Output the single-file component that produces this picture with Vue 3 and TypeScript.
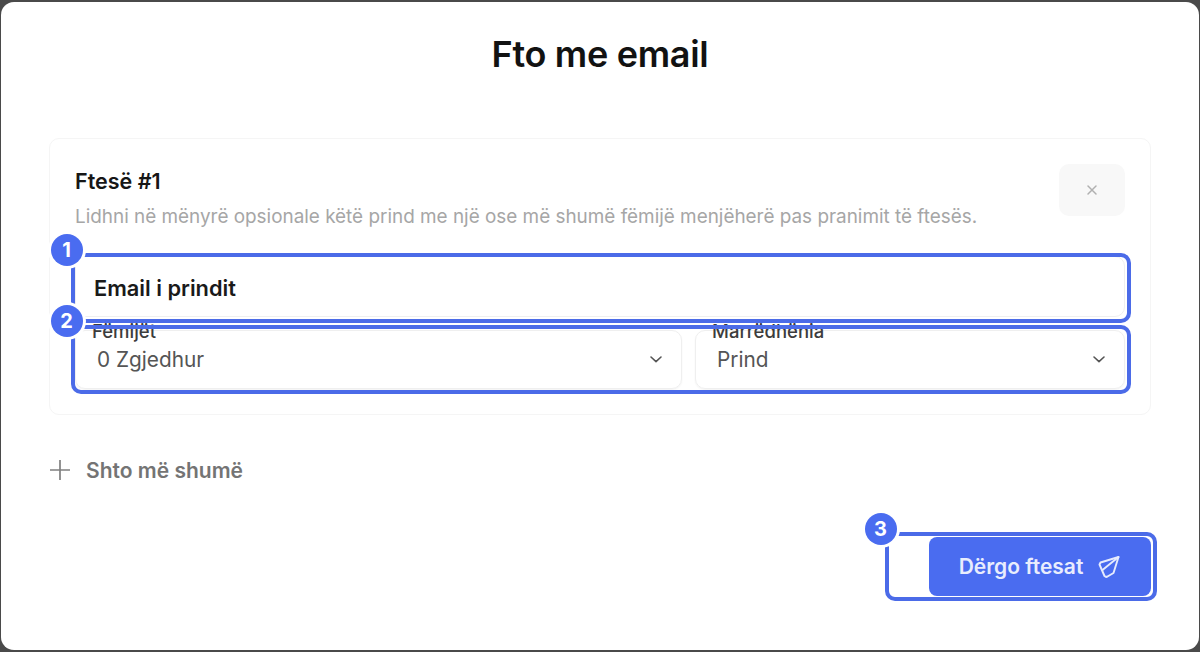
<script setup lang="ts">
const selects = [
  { label: 'Fëmijët', value: '0 Zgjedhur', cls: 'grow-a' },
  { label: 'Marrëdhënia', value: 'Prind', cls: 'grow-b' },
]
</script>

<template>
  <div class="page">
    <main class="modal">
      <h1 class="title">Fto me email</h1>
      <section class="card">
        <div class="card-head">
          <div class="head-text">
            <h2>Ftesë #1</h2>
            <p>Lidhni në mënyrë opsionale këtë prind me një ose më shumë fëmijë menjëherë pas pranimit të ftesës.</p>
          </div>
          <button class="close" type="button" aria-label="Mbyll">
            <svg width="12" height="12" viewBox="0 0 12 12" fill="none" stroke="#b0b0b0" stroke-width="1.5" stroke-linecap="round">
              <path d="M2 2l8 8M10 2l-8 8" />
            </svg>
          </button>
        </div>
        <div class="email-field">Email i prindit</div>
        <div class="select-row">
          <div v-for="s in selects" :key="s.label" class="select" :class="s.cls">
            <span class="float-label">{{ s.label }}</span>
            <span class="value">{{ s.value }}</span>
            <svg class="chev" width="16" height="16" viewBox="0 0 16 16" fill="none" stroke="#555" stroke-width="1.6" stroke-linecap="round" stroke-linejoin="round">
              <path d="M3 6l5 4.6L13 6" />
            </svg>
          </div>
        </div>
      </section>
      <button class="add" type="button">
        <svg width="22" height="22" viewBox="0 0 22 22" fill="none" stroke="#808080" stroke-width="1.7">
          <path d="M11 1v20M1 11h20" />
        </svg>
        <span>Shto më shumë</span>
      </button>
      <div class="actions">
        <button class="send" type="button">
          <span>Dërgo ftesat</span>
          <svg width="24" height="24" viewBox="0 0 24 24" fill="none" stroke="#e6ebfd" stroke-width="1.9" stroke-linejoin="round" stroke-linecap="round">
            <path d="M21.500 2L3.500 7.500 2.500 9.500l5 11.500 1.500 1 1.500-.5 6-3.500z" />
            <path d="M21.500 2L5.500 15" />
          </svg>
        </button>
      </div>
    </main>

    <div class="mark mark-1"><b>1</b></div>
    <div class="mark mark-2"><b>2</b></div>
    <div class="mark mark-3"><b>3</b></div>
  </div>
</template>

<style>
html, body { margin: 0; background: #4a4a4a; }
</style>

<style scoped>
.page {
  position: relative;
  width: 1200px;
  height: 652px;
  overflow: hidden;
  padding: 2px 1px 2px 1px;
  box-sizing: border-box;
  font-family: Inter, "Liberation Sans", sans-serif;
  display: flex;
}
.modal {
  flex: 1;
  background: #fff;
  border-radius: 13px;
  padding: 0 48px;
  display: flex;
  flex-direction: column;
}
.title {
  margin: 30px 0 0;
  height: 44px;
  line-height: 44px;
  text-align: center;
  font-size: 36px;
  font-weight: 600;
  letter-spacing: -0.3px;
  color: #121212;
}
.card {
  margin-top: 62px;
  height: 277px;
  box-sizing: border-box;
  border: 1.5px solid #f5f5f5;
  border-radius: 10px;
  padding: 25px 25px 0;
  display: flex;
  flex-direction: column;
}
.card-head {
  display: flex;
  justify-content: space-between;
  height: 52px;
}
.head-text h2 {
  margin: 5px 0 0;
  font-size: 21.5px;
  line-height: 24px;
  font-weight: 600;
  color: #161616;
}
.head-text p {
  margin: 13px 0 0;
  font-size: 18.9px;
  line-height: 22px;
  white-space: nowrap;
  color: #a6a6a6;
}
.close {
  width: 66px;
  height: 52px;
  border: 0;
  border-radius: 10px;
  background: #f8f8f8;
  display: flex;
  align-items: center;
  justify-content: center;
  padding: 0;
}
.email-field {
  margin-top: 40px;
  height: 61px;
  box-sizing: border-box;
  border: 1.5px solid #efefef;
  border-radius: 10px;
  padding-left: 18px;
  line-height: 62px;
  font-size: 21.8px;
  font-weight: 600;
  color: #1a1a1a;
}
.select-row {
  margin-top: 13px;
  display: flex;
  gap: 13px;
}
.select {
  position: relative;
  height: 59px;
  box-sizing: border-box;
  border: 1.5px solid #efefef;
  border-radius: 10px;
  box-shadow: 0 1px 2px rgba(0, 0, 0, 0.05);
  display: flex;
  align-items: center;
  justify-content: space-between;
  padding: 0 17.5px 0 21px;
}
.grow-a { width: 607px; }
.grow-b { flex: 1; }
.float-label {
  position: absolute;
  left: 16px;
  top: -10px;
  font-size: 18.500px;
  line-height: 20px;
  font-weight: 500;
  color: #3c3c3c;
}
.value {
  font-size: 20.8px;
  color: #555;
}
.chev {
  margin-top: -2px;
}
.add {
  margin-top: 42px;
  display: flex;
  align-items: center;
  gap: 15px;
  background: none;
  border: 0;
  padding: 0;
  font: inherit;
  font-size: 21px;
  font-weight: 600;
  color: #747474;
  height: 26px;
  width: max-content;
}
.actions {
  margin-top: 54px;
  display: flex;
  justify-content: flex-end;
}
.send {
  width: 222px;
  height: 59px;
  border: 0;
  border-radius: 8px;
  background: #4a6cf0;
  color: #e9edfd;
  font: inherit;
  font-size: 21px;
  font-weight: 600;
  display: flex;
  align-items: center;
  justify-content: center;
  gap: 14px;
}
.mark {
  position: absolute;
  box-sizing: border-box;
  border: 4px solid #4b6be8;
  border-radius: 10px;
  pointer-events: none;
}
.mark b {
  position: absolute;
  left: -24.500px;
  width: 32px;
  height: 32px;
  border-radius: 50%;
  background: #4a6cf0;
  box-shadow: 0 0 0 3px #fff;
  color: #fff;
  font-size: 20px;
  font-weight: 700;
  line-height: 32px;
  text-align: center;
}
.mark-1 { left: 71px; top: 253px; width: 1060px; height: 70px; }
.mark-1 b { top: -23.500px; }
.mark-2 { left: 71px; top: 325px; width: 1060px; height: 69px; }
.mark-2 b { top: -24.500px; }
.mark-3 { left: 885px; top: 532px; width: 272px; height: 69px; }
.mark-3 b { top: -23.500px; }
</style>
